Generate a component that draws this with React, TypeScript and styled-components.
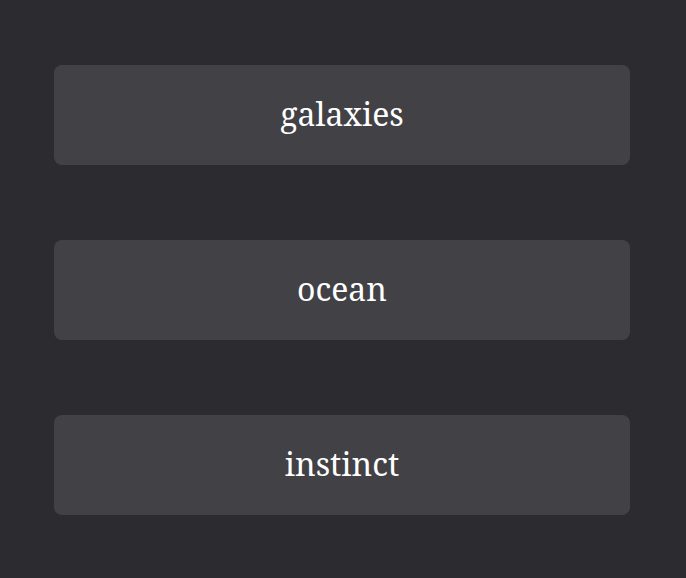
import React from "react";
import styled, { createGlobalStyle } from "styled-components";

const Global = createGlobalStyle`
  html, body { margin: 0; padding: 0; background: #2b2b30; }
  body { font-family: "Noto Serif", "DejaVu Serif", serif; }
`;

const Page = styled.div`
  box-sizing: border-box;
  width: 686px;
  min-height: 578px;
  padding: 65px 56px 0 54px;
  display: flex;
  flex-direction: column;
  gap: 75px;
  background: #2b2b30;
`;

const Card = styled.div`
  box-sizing: border-box;
  height: 100px;
  padding-bottom: 4px;
  border-radius: 8px;
  background: #424146;
  display: flex;
  align-items: center;
  justify-content: center;
  color: #ffffff;
  font-size: 32px;
`;

const words = ["galaxies", "ocean", "instinct"];

export default function App() {
  return (
    <>
      <Global />
      <Page>
        {words.map((w) => (
          <Card key={w}>{w}</Card>
        ))}
      </Page>
    </>
  );
}
